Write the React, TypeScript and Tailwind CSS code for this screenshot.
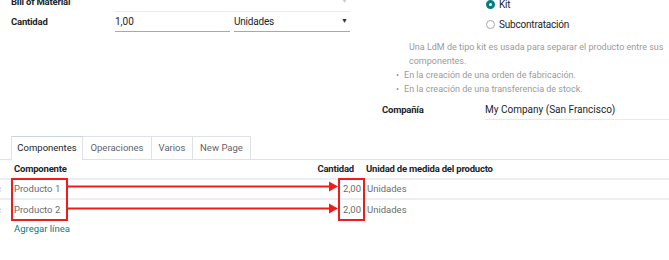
import React from 'react';

function Label({ children, className = '' }: { children: React.ReactNode; className?: string }) {
    return <div className={`text-[9.5px] font-bold tracking-[-0.2px] text-[#212529] ${className}`}>{children}</div>;
}

function Radio({ label, checked }: { label: string; checked?: boolean }) {
    return (
        <div className="flex h-[20px] items-center gap-[3px]">
            {checked ? (
                <span className="h-[9px] w-[9px] rounded-full border-[3px] border-[#017e84] bg-white" />
            ) : (
                <span className="h-[9px] w-[9px] rounded-full border border-[#a8a8a8] bg-white" />
            )}
            <span className="ml-[1px] text-[10px] tracking-[-0.2px] text-[#212529]">{label}</span>
        </div>
    );
}

export default function App() {
    const tabs = [
        { name: 'Componentes', w: 'w-[72px]' },
        { name: 'Operaciones', w: 'w-[69px]' },
        { name: 'Varios', w: 'w-[41px]' },
        { name: 'New Page', w: 'w-[58px]' },
    ];
    const rows = ['Producto 1', 'Producto 2'];

    return (
        <div
            className="relative h-[260px] w-[669px] overflow-hidden bg-white"
            style={{ fontFamily: 'Roboto, "Liberation Sans", sans-serif' }}
        >
            <div className="flex h-[120px]">
                {/* left column */}
                <div className="ml-[11px] mt-[-8px] flex w-[339px] flex-col">
                    <div className="flex h-[20px] items-center">
                        <Label className="w-[104px]">Bill of Material</Label>
                        <div className="flex h-full flex-1 items-center justify-end border-b border-[#e7e9ed]">
                            <span className="mr-[2px] text-[7px] text-[#c8c8c8]">▼</span>
                        </div>
                    </div>
                    <div className="flex h-[20px] items-center">
                        <Label className="w-[104px]">Cantidad</Label>
                        <div className="flex h-full w-[115px] items-center border-b border-[#a8a8a8] text-[10px] text-[#212529]">
                            1,00
                        </div>
                        <div className="ml-[4px] flex h-full flex-1 items-center justify-between border-b border-[#a8a8a8]">
                            <span className="text-[10px] tracking-[-0.2px] text-[#212529]">Unidades</span>
                            <span className="mr-[2px] text-[7px] text-[#333]">▼</span>
                        </div>
                    </div>
                </div>

                {/* right column */}
                <div className="ml-[32px] flex flex-1 flex-col">
                    <div className="ml-[104px] mt-[-6px] flex flex-col">
                        <Radio label="Kit" checked />
                        <Radio label="Subcontratación" />
                    </div>
                    <div className="mt-[6px] whitespace-nowrap text-[9px] leading-[14px] text-[#9a9a9a]">
                        <p className="ml-[27px]">Una LdM de tipo kit es usada para separar el producto entre sus</p>
                        <p className="ml-[27px]">componentes.</p>
                        <ul className="ml-[14px]">
                            <li className="flex gap-[5px]">
                                <span>•</span>En la creación de una orden de fabricación.
                            </li>
                            <li className="flex gap-[5px]">
                                <span>•</span>En la creación de una transferencia de stock.
                            </li>
                        </ul>
                    </div>
                    <div className="mt-[4px] flex h-[20px] items-center">
                        <Label className="w-[103px]">Compañía</Label>
                        <div className="flex h-full flex-1 items-center border-b border-[#e7e9ed] text-[10px] text-[#212529]">
                            My Company (San Francisco)
                        </div>
                    </div>
                </div>
            </div>

            {/* tabs */}
            <div className="mt-[16px] flex h-[24px] border-b border-[#dee2e6] pl-[11px]">
                {tabs.map((t, i) => (
                    <div
                        key={t.name}
                        className={`flex items-center justify-center border-t border-r border-[#dee2e6] text-[9.5px] ${t.w} ${
                            i === 0 ? 'mb-[-1px] border-l border-t-[#cfd4da] bg-white text-[#212529]' : 'text-[#5f6368]'
                        }`}
                    >
                        {t.name}
                    </div>
                ))}
            </div>

            {/* table */}
            <div className="flex h-[20px] items-center border-b-2 border-[#eceef1] text-[9.5px] font-bold tracking-[-0.2px] text-[#212529]">
                <div className="ml-[14px] w-[290px]">Componente</div>
                <div className="w-[50px] text-right">Cantidad</div>
                <div className="ml-[12px]">Unidad de medida del producto</div>
            </div>
            {rows.map((r, i) => (
                <div
                    key={r}
                    className={`flex h-[20px] items-center text-[9.5px] text-[#6c6c6c] ${i === 0 ? 'border-b-2 border-[#eceef1]' : ''}`}
                >
                    <span className="ml-[-4px] w-[18px] text-[#999]">c</span>
                    <div className="w-[300px]">{r}</div>
                    <div className="w-[47px] text-right">2,00</div>
                    <div className="ml-[6px]">Unidades</div>
                </div>
            ))}
            <div className="ml-[14px] mt-[2px] text-[9.5px] text-[#017e84]">Agregar línea</div>

            {/* annotations */}
            <div className="absolute left-[11px] top-[178px] h-[43px] w-[57px] border-2 border-[#ee1c1c]" />
            <div className="absolute left-[338px] top-[178px] h-[43px] w-[27px] border-2 border-[#ee1c1c]" />
            <svg className="absolute left-0 top-0" width="669" height="260">
                <line x1="68" y1="186.5" x2="330" y2="186.5" stroke="#ee1c1c" strokeWidth="2" />
                <polygon points="329,181.5 338,186.5 329,191.5" fill="#ee1c1c" />
                <line x1="68" y1="208.5" x2="330" y2="208.5" stroke="#ee1c1c" strokeWidth="2" />
                <polygon points="329,203.5 338,208.5 329,213.5" fill="#ee1c1c" />
            </svg>
        </div>
    );
}
